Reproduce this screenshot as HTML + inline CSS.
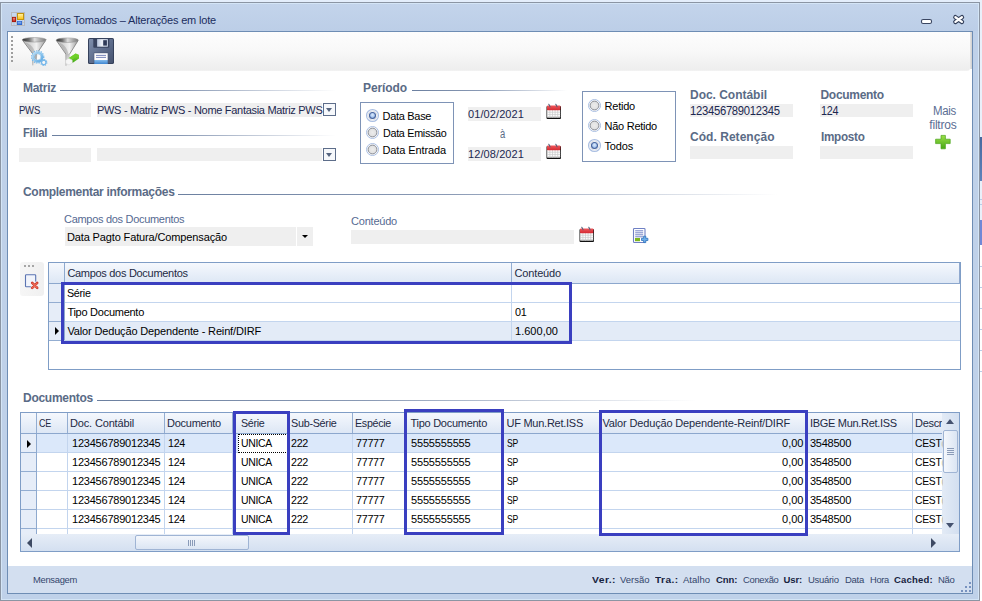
<!DOCTYPE html>
<html lang="pt-BR">
<head>
<meta charset="utf-8">
<title>Serviços Tomados – Alterações em lote</title>
<style>
html,body{margin:0;padding:0}
body{width:982px;height:601px;position:relative;overflow:hidden;background:#e4eefb;font-family:"Liberation Sans",sans-serif;font-size:11px;color:#000}
.a,.t{position:absolute;display:block}
.t{white-space:pre;transform-origin:0 0}
.fld{background:#efefef}
.hl{height:1px}
.vl{width:1px}
.box{border:3px solid #3a3fc0;box-sizing:border-box}
svg{position:absolute;overflow:visible}
</style>
</head>
<body>
<!-- things behind the window (right edge) -->
<div class="a" style="left:980px;top:0;width:2px;height:601px;background:#fff"></div>
<div class="a" style="left:980px;top:0;width:2px;height:220px;background:#e9f0fa"></div>
<div class="a" style="left:980px;top:137px;width:2px;height:44px;background:linear-gradient(#47699f,#5f83bb)"></div>
<div class="a" style="left:980px;top:220px;width:2px;height:25px;background:#7188d6"></div>
<div class="a" style="left:980px;top:199px;width:2px;height:1px;background:#b9cde8;box-shadow:0 5px #b9cde8,0 67px #b9cde8,0 88px #b9cde8,0 109px #b9cde8,0 130px #b9cde8,0 151px #b9cde8,0 172px #b9cde8"></div>

<!-- window frame -->
<div class="a" id="win" style="left:0;top:2px;width:980px;height:599px;box-sizing:border-box;border:1px solid #8b95a3;background:#bfd1e9">
  <div class="a" style="left:0;top:0;width:978px;height:597px;box-sizing:border-box;border:1px solid #d4e5f6"></div>
  <div class="a" id="titlebar" style="left:1px;top:1px;width:976px;height:27px;background:linear-gradient(#c3d4eb,#bccee7)"></div>
</div>
<!-- app icon -->
<svg style="left:11px;top:12px" width="14" height="14" viewBox="0 0 14 14">
  <defs>
    <linearGradient id="iy" x1="0" x2="0" y1="0" y2="1"><stop offset="0" stop-color="#fff0a0"/><stop offset="1" stop-color="#ffc61a"/></linearGradient>
    <linearGradient id="ir" x1="0" x2="0" y1="0" y2="1"><stop offset="0" stop-color="#f28a7c"/><stop offset="1" stop-color="#cf2a1c"/></linearGradient>
    <linearGradient id="ib" x1="0" x2="0" y1="0" y2="1"><stop offset="0" stop-color="#8fb9f6"/><stop offset="1" stop-color="#3f7ee0"/></linearGradient>
  </defs>
  <rect x="0.5" y="0.5" width="13" height="13" fill="#c6d8f0" stroke="#b7b9bd" stroke-width="1"/>
  <path d="M5.5 0.5V13.5M0.5 4.5H5.5M0.5 10.5H13.5M3 10.5V13.5M11.5 8.5V13.5" stroke="#b9bcc2" stroke-width=".7" fill="none"/>
  <rect x="6" y="1" width="7" height="7" fill="#c2940f"/>
  <rect x="7" y="2" width="5" height="5" fill="url(#iy)"/>
  <rect x="1" y="5" width="4" height="5" fill="#a3170c"/>
  <rect x="1.8" y="5.8" width="2.4" height="3.4" fill="url(#ir)"/>
  <rect x="6" y="9" width="5" height="4" fill="#2c62c8"/>
  <rect x="6.7" y="9.7" width="3.6" height="2.6" fill="url(#ib)"/>
</svg>
<!-- window buttons -->
<svg style="left:0;top:0" width="982" height="40" viewBox="0 0 982 40">
  <rect x="921.5" y="19.5" width="10" height="4" rx="1.6" fill="#fff" stroke="#3b4762" stroke-width="1.1"/>
  <path d="M955.4 17.2 L961.9 21.9 M961.9 17.2 L955.4 21.9" stroke="#333f5a" stroke-width="4.5" stroke-linecap="round" fill="none"/>
  <path d="M955.4 17.2 L961.9 21.9 M961.9 17.2 L955.4 21.9" stroke="#fff" stroke-width="2.3" stroke-linecap="round" fill="none"/>
</svg>

<!-- client area -->
<div class="a" style="left:7px;top:31px;width:966px;height:563px;box-sizing:border-box;border:1px solid #6e8db4;background:#fff"></div>
<!-- toolbar -->
<div class="a" style="left:970px;top:32px;width:2px;height:37px;background:linear-gradient(90deg,#e6e6e6,#cfcfcf)"></div>
<div class="a" style="left:9px;top:32px;width:961px;height:39px;background:linear-gradient(#fdfdfd 0%,#f8f8f8 50%,#eeeeee 96%,#f3f3f3 100%);border-radius:0 0 3px 3px"></div>
<div class="a" style="left:11px;top:36px;width:2px;height:2px;background:#9e9e9e;box-shadow:0 4px #9e9e9e,0 8px #9e9e9e,0 12px #9e9e9e,0 16px #9e9e9e,0 20px #9e9e9e,0 24px #9e9e9e"></div>

<!-- group header lines -->
<div class="a hl" style="left:60px;top:90px;width:276px;background:linear-gradient(90deg,#6c80a0 0%,#8a9ab5 45%,#fff 100%)"></div>
<div class="a hl" style="left:52px;top:135px;width:284px;background:linear-gradient(90deg,#6c80a0 0%,#8a9ab5 45%,#fff 100%)"></div>
<div class="a hl" style="left:412px;top:90px;width:155px;background:linear-gradient(90deg,#6c80a0 0%,#8a9ab5 45%,#fff 100%)"></div>
<div class="a hl" style="left:178px;top:194px;width:600px;background:linear-gradient(90deg,#6c80a0 0%,#8a9ab5 45%,#fff 100%)"></div>
<div class="a hl" style="left:97px;top:400px;width:600px;background:linear-gradient(90deg,#6c80a0 0%,#8a9ab5 45%,#fff 100%)"></div>

<!-- Matriz / Filial fields -->
<div class="a fld" style="left:19px;top:103px;width:72px;height:14px"></div>
<div class="a fld" style="left:97px;top:103px;width:225px;height:14px"></div>
<div class="a fld" style="left:19px;top:148px;width:72px;height:14px"></div>
<div class="a fld" style="left:97px;top:148px;width:225px;height:13px"></div>
<div class="a ddb" style="left:323px;top:103px;width:13px;height:13px;box-sizing:border-box;border:1px solid #5d6d8a;background:#f6f8fb"></div>
<div class="a" style="left:326px;top:108px;width:0;height:0;border-left:3.5px solid transparent;border-right:3.5px solid transparent;border-top:4px solid #55647f"></div>
<div class="a ddb" style="left:323px;top:148px;width:13px;height:13px;box-sizing:border-box;border:1px solid #5d6d8a;background:#f6f8fb"></div>
<div class="a" style="left:326px;top:153px;width:0;height:0;border-left:3.5px solid transparent;border-right:3.5px solid transparent;border-top:4px solid #55647f"></div>

<!-- Periodo radio box -->
<div class="a" style="left:360px;top:102px;width:94px;height:62px;box-sizing:border-box;border:1px solid #7e93b6"></div>
<!-- date fields -->
<div class="a fld" style="left:468px;top:107px;width:73px;height:14px"></div>
<div class="a fld" style="left:468px;top:147px;width:73px;height:14px"></div>
<!-- Retido radio box -->
<div class="a" style="left:582px;top:91px;width:94px;height:71px;box-sizing:border-box;border:1px solid #7e93b6"></div>
<!-- right fields -->
<div class="a fld" style="left:690px;top:104px;width:103px;height:13px"></div>
<div class="a fld" style="left:820px;top:104px;width:93px;height:13px"></div>
<div class="a fld" style="left:690px;top:146px;width:103px;height:13px"></div>
<div class="a fld" style="left:820px;top:146px;width:93px;height:13px"></div>

<!-- complementar -->
<div class="a fld" style="left:65px;top:227px;width:231px;height:19px"></div>
<div class="a fld" style="left:297px;top:227px;width:16px;height:19px"></div>
<div class="a" style="left:302px;top:235px;width:0;height:0;border-left:3px solid transparent;border-right:3px solid transparent;border-top:3px solid #000"></div>
<div class="a fld" style="left:351px;top:230px;width:223px;height:14px"></div>

<!-- small side toolbar -->
<div class="a" style="left:20px;top:262px;width:24px;height:34px;background:linear-gradient(90deg,#f6f6f6,#f0f0f0);border-radius:3px"></div>
<div class="a" style="left:24px;top:265px;width:2px;height:2px;background:#a6a6a6;box-shadow:4px 0 #a6a6a6,8px 0 #a6a6a6"></div>

<!-- grid 1 -->
<div class="a" id="g1" style="left:48px;top:262px;width:913px;height:108px;box-sizing:border-box;border:1px solid #7f9dc6;background:#fff">
  <div class="a" style="left:0;top:0;width:911px;height:20px;background:linear-gradient(#f5f8fd,#dde7f5)"></div>
  <div class="a hl" style="left:0;top:20px;width:911px;background:#8ca7cd"></div>
  <div class="a" style="left:0;top:21px;width:15px;height:56px;background:#e6edf8"></div>
  <div class="a" style="left:16px;top:59px;width:895px;height:18px;background:#e3ebf7"></div>
  <div class="a hl" style="left:0;top:39px;width:911px;background:#c3d5ee"></div>
  <div class="a hl" style="left:0;top:58px;width:911px;background:#c3d5ee"></div>
  <div class="a hl" style="left:0;top:77px;width:911px;background:#c3d5ee"></div>
  <div class="a vl" style="left:15px;top:0;height:77px;background:#8ea9ce"></div>
  <div class="a vl" style="left:462px;top:0;height:77px;background:#c3d5ee"></div>
  <div class="a vl" style="left:462px;top:0;height:20px;background:#93adD1"></div>
  <div class="a vl" style="left:910px;top:0;height:20px;background:#90a9cf"></div>
  <div class="a hl" style="left:0;top:39px;width:15px;background:#93add1;box-shadow:0 19px #93add1,0 38px #93add1"></div>
  <div class="a" style="left:6px;top:64px;width:0;height:0;border-top:4px solid transparent;border-bottom:4px solid transparent;border-left:4px solid #000"></div>
</div>
<div class="a box" style="left:61px;top:282px;width:511px;height:62px"></div>

<!-- grid 2 -->
<div class="a" id="g2" style="left:20px;top:412px;width:940px;height:140px;box-sizing:border-box;border:1px solid #7f9dc6;background:#fff;overflow:hidden">
  <div class="a" style="left:0;top:0;width:938px;height:20px;background:linear-gradient(#f5f8fd,#dde7f5)"></div>
  <div class="a" style="left:0;top:21px;width:15px;height:101px;background:#e6edf8"></div>
  <div class="a" style="left:16px;top:21px;width:906px;height:18px;background:#dbe8fa"></div>
  <div class="a hl" style="left:0;top:20px;width:938px;background:#8ca7cd"></div>
  <div class="a hl" style="left:0;top:39px;width:922px;background:#c3d5ee"></div>
  <div class="a hl" style="left:0;top:58px;width:922px;background:#c3d5ee"></div>
  <div class="a hl" style="left:0;top:77px;width:922px;background:#c3d5ee"></div>
  <div class="a hl" style="left:0;top:96px;width:922px;background:#c3d5ee"></div>
  <div class="a hl" style="left:0;top:115px;width:922px;background:#c3d5ee"></div>
  <div class="a vl" style="left:15px;top:0;height:20px;background:#93add1"></div><div class="a vl" style="left:15px;top:21px;height:101px;background:#8ea9ce"></div>
<div class="a vl" style="left:46px;top:0;height:20px;background:#93add1"></div><div class="a vl" style="left:46px;top:21px;height:101px;background:#c3d5ee"></div>
<div class="a vl" style="left:143px;top:0;height:20px;background:#93add1"></div><div class="a vl" style="left:143px;top:21px;height:101px;background:#c3d5ee"></div>
<div class="a vl" style="left:211px;top:0;height:20px;background:#93add1"></div><div class="a vl" style="left:211px;top:21px;height:101px;background:#c3d5ee"></div>
<div class="a vl" style="left:267px;top:0;height:20px;background:#93add1"></div><div class="a vl" style="left:267px;top:21px;height:101px;background:#c3d5ee"></div>
<div class="a vl" style="left:331px;top:0;height:20px;background:#93add1"></div><div class="a vl" style="left:331px;top:21px;height:101px;background:#c3d5ee"></div>
<div class="a vl" style="left:384px;top:0;height:20px;background:#93add1"></div><div class="a vl" style="left:384px;top:21px;height:101px;background:#c3d5ee"></div>
<div class="a vl" style="left:482px;top:0;height:20px;background:#93add1"></div><div class="a vl" style="left:482px;top:21px;height:101px;background:#c3d5ee"></div>
<div class="a vl" style="left:578px;top:0;height:20px;background:#93add1"></div><div class="a vl" style="left:578px;top:21px;height:101px;background:#c3d5ee"></div>
<div class="a vl" style="left:786px;top:0;height:20px;background:#93add1"></div><div class="a vl" style="left:786px;top:21px;height:101px;background:#c3d5ee"></div>
<div class="a vl" style="left:891px;top:0;height:20px;background:#93add1"></div><div class="a vl" style="left:891px;top:21px;height:101px;background:#c3d5ee"></div>

  <div class="a hl" style="left:0;top:39px;width:15px;background:#93add1;box-shadow:0 19px #93add1,0 38px #93add1,0 57px #93add1,0 76px #93add1"></div>
  <div class="a" style="left:6px;top:27px;width:0;height:0;border-top:4px solid transparent;border-bottom:4px solid transparent;border-left:4px solid #000"></div>
  <!-- focus rect -->
  <div class="a" style="left:217px;top:21px;width:50px;height:19px;box-sizing:border-box;border:1px dotted #000;background:#fff"></div>
  <!-- vertical scrollbar -->
  <div class="a" style="left:921px;top:0;width:17px;height:122px;background:linear-gradient(90deg,#e3ebf6,#d3dff0)"></div>
  <div class="a" style="left:922px;top:17px;width:15px;height:43px;box-sizing:border-box;border:1px solid #9fb4d4;border-radius:2px;background:linear-gradient(90deg,#f4f7fc,#dbe5f3)"></div>
  <div class="a" style="left:926px;top:35px;width:7px;height:1px;background:#8a9bb8;box-shadow:0 2px #8a9bb8,0 4px #8a9bb8,0 6px #8a9bb8"></div>
  <div class="a" style="left:925px;top:6px;width:0;height:0;border-left:4.5px solid transparent;border-right:4.5px solid transparent;border-bottom:5px solid #45526f"></div>
  <div class="a" style="left:925px;top:110px;width:0;height:0;border-left:4.5px solid transparent;border-right:4.5px solid transparent;border-top:5px solid #45526f"></div>
  <!-- horizontal scrollbar -->
  <div class="a" style="left:0;top:121px;width:938px;height:18px;background:linear-gradient(#e6edf7,#d3dff0)"></div>
  <div class="a" style="left:114px;top:122px;width:114px;height:15px;box-sizing:border-box;border:1px solid #9fb4d4;border-radius:2px;background:linear-gradient(#f4f7fc,#dbe5f3)"></div>
  <div class="a" style="left:167px;top:127px;width:1px;height:6px;background:#8a9bb8;box-shadow:2px 0 #8a9bb8,4px 0 #8a9bb8,6px 0 #8a9bb8"></div>
  <div class="a" style="left:6px;top:125px;width:0;height:0;border-top:5px solid transparent;border-bottom:5px solid transparent;border-right:5px solid #3e4a63"></div>
  <div class="a" style="left:910px;top:125px;width:0;height:0;border-top:5px solid transparent;border-bottom:5px solid transparent;border-left:5px solid #3e4a63"></div>
</div>
<div class="a box" style="left:233px;top:411px;width:57px;height:124px"></div>
<div class="a box" style="left:404px;top:409px;width:100px;height:126px"></div>
<div class="a box" style="left:599px;top:410px;width:209px;height:126px"></div>

<!-- status bar -->
<div class="a" style="left:8px;top:566px;width:964px;height:27px;background:#d3dff0"></div>
<div class="a" style="left:969px;top:582px;width:2px;height:2px;background:#7892bf;box-shadow:0 4px #7892bf,0 8px #7892bf,-4px 4px #7892bf,-4px 8px #7892bf,-8px 8px #7892bf"></div>

<svg style="left:0;top:0" width="982" height="601" viewBox="0 0 982 601">
<defs>
  <linearGradient id="fr" x1="0" x2="1" y1="0" y2="0"><stop offset="0" stop-color="#2c2c2c"/><stop offset=".28" stop-color="#6e6e6e"/><stop offset=".52" stop-color="#dedede"/><stop offset=".75" stop-color="#a8a8a8"/><stop offset="1" stop-color="#777"/></linearGradient>
  <linearGradient id="fc" x1="0" x2="1" y1="0" y2="0"><stop offset="0" stop-color="#bdbdbd"/><stop offset=".35" stop-color="#d9d9d9"/><stop offset=".6" stop-color="#f1f1f1"/><stop offset="1" stop-color="#9c9c9c"/></linearGradient>
  <linearGradient id="fs" x1="0" x2="0" y1="0" y2="1"><stop offset="0" stop-color="#bdbdbd"/><stop offset="1" stop-color="#f4f4f4"/></linearGradient>
  <g id="funnel">
    <path d="M0.6 3.2 L23.8 3.2 L14.9 16.2 L14.5 27.2 L11.6 29.2 L10.6 28.2 L10.4 16.2 Z" fill="url(#fc)"/>
    <path d="M3.5 5.2 C7.5 6.5 12 9.5 13.6 17 L11 17 Z" fill="#8e8e8e" opacity=".42"/>
    <path d="M0.8 3.4 L10.9 16.8 M23.6 3.4 L14.5 16.8" stroke="#6b6b6b" stroke-width=".9" fill="none" opacity=".8"/>
    <path d="M10.5 16.4 L10.7 28.2 L11.6 29.1 L14.4 27.2 L14.8 16.4 Z" fill="url(#fs)"/>
    <path d="M10.6 16.6 L10.8 28.2" stroke="#8a8a8a" stroke-width=".8" opacity=".7"/>
    <ellipse cx="12.2" cy="2.6" rx="12.1" ry="2.3" fill="url(#fr)"/>
    <ellipse cx="12.2" cy="2.6" rx="12.1" ry="2.3" fill="none" stroke="#8d8d8d" stroke-width=".5"/>
  </g>
  <linearGradient id="gear" x1="0" x2="1" y1="0" y2="1"><stop offset="0" stop-color="#c6e6fa"/><stop offset=".5" stop-color="#9dd0f3"/><stop offset="1" stop-color="#62abe4"/></linearGradient>
  <linearGradient id="er" x1="0" x2="0" y1="0" y2="1"><stop offset="0" stop-color="#8be03c"/><stop offset="1" stop-color="#3da712"/></linearGradient>
  <linearGradient id="fl" x1="0" x2="1" y1="0" y2="1"><stop offset="0" stop-color="#8090ad"/><stop offset=".5" stop-color="#5f6e8d"/><stop offset="1" stop-color="#46536f"/></linearGradient>
  <linearGradient id="sl" x1="0" x2="1" y1="0" y2="0"><stop offset="0" stop-color="#b9c6dd"/><stop offset=".45" stop-color="#edf1f8"/><stop offset="1" stop-color="#c4cfe3"/></linearGradient>
  <linearGradient id="bl" x1="0" x2="0" y1="0" y2="1"><stop offset="0" stop-color="#86bcec"/><stop offset="1" stop-color="#3f86d2"/></linearGradient>
  <linearGradient id="cr" x1="0" x2="0" y1="0" y2="1"><stop offset="0" stop-color="#f0585c"/><stop offset="1" stop-color="#d42a32"/></linearGradient>
  <g id="cal">
    <rect x="0.5" y="2" width="14.5" height="13" rx="1" fill="#111"/>
    <rect x="1.2" y="6" width="13" height="7.6" fill="#fff"/>
    <path d="M1.2 8.2H14.2M1.2 10.4H14.2M1.2 12.4H14.2M3.9 6V13.6M6.5 6V13.6M9.1 6V13.6M11.7 6V13.6" stroke="#c9c9c9" stroke-width=".7" fill="none"/>
    <rect x="1" y="1.4" width="13.4" height="4.8" rx=".8" fill="url(#cr)"/>
    <path d="M2.8 0.3 L4.1 2.8 M9.8 0.3 L11.1 2.8" stroke="#56617a" stroke-width="1.1" stroke-linecap="round"/>
  </g>
  <radialGradient id="r0" cx=".5" cy=".5" r=".5"><stop offset="0" stop-color="#ececec"/><stop offset=".75" stop-color="#e2e2e2"/><stop offset="1" stop-color="#cfcfcf"/></radialGradient>
  <radialGradient id="r1" cx=".5" cy=".4" r=".55"><stop offset="0" stop-color="#dcebfc"/><stop offset=".7" stop-color="#a9c6ee"/><stop offset="1" stop-color="#7fa3da"/></radialGradient>
  <g id="rad0">
    <circle r="6" fill="#fff" stroke="#a9bee2" stroke-width="1"/>
    <circle r="4.4" fill="url(#r0)" stroke="#8c9099" stroke-width="1"/>
  </g>
  <g id="rad1">
    <circle r="6" fill="#fff" stroke="#a9bee2" stroke-width="1.1"/>
    <circle r="4.6" fill="#fbfcfe" stroke="#c3c9d6" stroke-width=".7"/>
    <circle r="3" fill="url(#r1)" stroke="#4a669e" stroke-width="1.1"/>
  </g>
  <linearGradient id="pg" x1="0" x2="0" y1="0" y2="1"><stop offset="0" stop-color="#9be048"/><stop offset="1" stop-color="#46a715"/></linearGradient>
</defs>
<!-- toolbar: filter config -->
<use href="#funnel" x="22" y="37.2"/>
<g transform="translate(37.7 56.9)">
  <circle r="5.95" fill="none" stroke="#74b7ea" stroke-width="1.5" stroke-dasharray="1.3 1.036"/>
  <circle r="4.45" fill="none" stroke="url(#gear)" stroke-width="2.5"/>
  <circle r="4.45" fill="none" stroke="#4f9ddb" stroke-width=".5" opacity=".6"/>
  <circle r="3.2" fill="#fbfbfb"/>
  <path d="M-3.1 -0.8 A3.2 3.2 0 0 0 -0.9 3.05 L-0.5 -3.15 A3.2 3.2 0 0 0 -3.1 -0.8 Z" fill="#8f8f8f" opacity=".7"/>
  <circle r="3.2" fill="none" stroke="#5fa6de" stroke-width=".5"/>
</g>
<g transform="translate(43.8 62.5)">
  <circle r="3" fill="none" stroke="#72b5e8" stroke-width="1.2" stroke-dasharray="1.1 1.256"/>
  <circle r="2.15" fill="none" stroke="#77b8ea" stroke-width="1.5"/>
  <circle r="1.35" fill="#f8f8f8"/>
</g>
<!-- toolbar: filter clear -->
<g transform="translate(56 37.6) scale(0.925 1)"><use href="#funnel"/></g>
<path d="M68.2 58.6 L75.6 53.4 L79 55 L79 58.6 L72.4 63 Z" fill="url(#er)"/>
<path d="M68.2 58.6 L75.6 53.4 L79 55 L71.8 59.8 Z" fill="#6fd02a"/>
<path d="M65.6 60.4 L68.6 58.2 L72.2 60 L72.4 63 L69 65 L65.8 63.4 Z" fill="#f6f6f6" stroke="#d2d2d2" stroke-width=".5"/>
<!-- toolbar: save -->
<rect x="88" y="38" width="26" height="26" rx="1.6" fill="#36425c"/>
<rect x="89" y="39" width="24" height="24" rx="1" fill="url(#fl)"/>
<rect x="93.3" y="38.4" width="16" height="9.4" rx=".8" fill="#39445f"/>
<rect x="97.1" y="39.1" width="10.8" height="7.6" fill="url(#sl)"/>
<rect x="103.2" y="40.2" width="3.7" height="5.4" fill="#2f3a57"/>
<rect x="93.8" y="52.6" width="14.4" height="11.4" fill="#465370"/>
<rect x="94.3" y="53.2" width="13.4" height="6.8" fill="#fdfdfe"/>
<rect x="94.3" y="60" width="13.4" height="4" fill="url(#bl)"/>
<path d="M96 55.4H106M96 57.4H106" stroke="#6b79b2" stroke-width=".9"/>
<!-- calendars -->
<use href="#cal" x="546" y="104"/>
<use href="#cal" x="546" y="144"/>
<use href="#cal" x="579" y="227"/>
<!-- radios -->
<use href="#rad1" x="372.5" y="115.5"/>
<use href="#rad0" x="372.5" y="132.5"/>
<use href="#rad0" x="372.5" y="149.5"/>
<use href="#rad0" x="594.5" y="105.5"/>
<use href="#rad0" x="594.5" y="125.5"/>
<use href="#rad1" x="594.5" y="145.5"/>
<!-- plus -->
<path d="M941 135.4H945.4V139.2H950.2V143.6H945.4V148.8H941V143.6H935.6V139.2H941Z" fill="url(#pg)" stroke="#4aa51a" stroke-width=".7" stroke-linejoin="round"/>
<!-- add-doc icon -->
<rect x="633.5" y="228.5" width="11.5" height="14" rx=".8" fill="#fff" stroke="#6f80c4" stroke-width="1.1"/>
<path d="M635.2 230.8H643.2M635.2 232.8H643.2M635.2 234.8H643.2M635.2 236.8H643.2" stroke="#7383c6" stroke-width="1"/>
<rect x="635" y="238" width="5" height="3.2" fill="#7cb61f"/>
<path d="M643.6 236.2H645.8V238.3H647.9V240.5H645.8V242.6H643.6V240.5H641.5V238.3H643.6Z" fill="#6fb0ea" stroke="#2f72bd" stroke-width=".8" stroke-linejoin="round"/>
<!-- delete-row icon -->
<rect x="25.5" y="274.7" width="10.2" height="12" rx=".8" fill="#f1f4fb" stroke="#5b74b2" stroke-width="1.1"/>
<circle cx="34.7" cy="285.4" r="4" fill="#f4f4f4"/>
<path d="M32.2 282.9L37.2 287.9M37.2 282.9L32.2 287.9" stroke="#c8372b" stroke-width="2.6" stroke-linecap="round"/>
<path d="M32.4 283.1L37 287.7M37 283.1L32.4 287.7" stroke="#ec6a56" stroke-width="1.3" stroke-linecap="round"/>
</svg>

<span class="t" style="left:30px;top:14px;font-size:11px;line-height:13px;color:#1b2d5e;letter-spacing:-0.173px;">Serviços Tomados – Alterações em lote</span>
<span class="t" style="left:23px;top:81px;font-size:12px;line-height:14px;font-weight:bold;color:#5a6b86;letter-spacing:-0.279px;">Matriz</span>
<span class="t" style="left:23px;top:126px;font-size:12px;line-height:14px;font-weight:bold;color:#5a6b86;letter-spacing:-0.300px;transform:scaleX(0.9396);">Filial</span>
<span class="t" style="left:363px;top:81px;font-size:12px;line-height:14px;font-weight:bold;color:#5a6b86;letter-spacing:-0.096px;">Período</span>
<span class="t" style="left:23px;top:185px;font-size:12px;line-height:14px;font-weight:bold;color:#5a6b86;letter-spacing:-0.300px;">Complementar informações</span>
<span class="t" style="left:23px;top:391px;font-size:12px;line-height:14px;font-weight:bold;color:#5a6b86;letter-spacing:-0.269px;">Documentos</span>
<span class="t" style="left:690px;top:88px;font-size:12px;line-height:14px;font-weight:bold;color:#5a6b86;letter-spacing:-0.026px;">Doc. Contábil</span>
<span class="t" style="left:820.5px;top:88px;font-size:12px;line-height:14px;font-weight:bold;color:#5a6b86;letter-spacing:-0.300px;">Documento</span>
<span class="t" style="left:690px;top:130px;font-size:12px;line-height:14px;font-weight:bold;color:#5a6b86;letter-spacing:0.037px;">Cód. Retenção</span>
<span class="t" style="left:820.5px;top:130px;font-size:12px;line-height:14px;font-weight:bold;color:#5a6b86;letter-spacing:-0.300px;transform:scaleX(0.9760);">Imposto</span>
<span class="t" style="left:19px;top:104px;font-size:11px;line-height:13px;color:#1c2850;letter-spacing:-0.300px;transform:scaleX(0.8691);">PWS</span>
<span class="t" style="left:97px;top:104px;font-size:11px;line-height:13px;color:#1c2850;letter-spacing:-0.300px;">PWS - Matriz PWS - Nome Fantasia Matriz PWS</span>
<span class="t" style="left:382.5px;top:110px;font-size:11px;line-height:13px;letter-spacing:-0.300px;">Data Base</span>
<span class="t" style="left:382.5px;top:127px;font-size:11px;line-height:13px;letter-spacing:-0.300px;transform:scaleX(0.9787);">Data Emissão</span>
<span class="t" style="left:382.5px;top:144px;font-size:11px;line-height:13px;letter-spacing:-0.111px;">Data Entrada</span>
<span class="t" style="left:468px;top:108px;font-size:11px;line-height:13px;color:#1c2850;letter-spacing:0.094px;">01/02/2021</span>
<span class="t" style="left:499.5px;top:127px;font-size:12px;line-height:14px;color:#5a6b86;letter-spacing:-0.300px;transform:scaleX(0.7828);">à</span>
<span class="t" style="left:468px;top:148px;font-size:11px;line-height:13px;color:#1c2850;letter-spacing:0.094px;">12/08/2021</span>
<span class="t" style="left:604.5px;top:100px;font-size:11px;line-height:13px;letter-spacing:-0.216px;">Retido</span>
<span class="t" style="left:604.5px;top:120px;font-size:11px;line-height:13px;letter-spacing:-0.255px;">Não Retido</span>
<span class="t" style="left:604.5px;top:140px;font-size:11px;line-height:13px;letter-spacing:-0.172px;">Todos</span>
<span class="t" style="left:690.3px;top:104px;font-size:12px;line-height:14px;color:#1c2850;letter-spacing:-0.300px;transform:scaleX(0.9382);">123456789012345</span>
<span class="t" style="left:820.8px;top:104px;font-size:12px;line-height:14px;color:#1c2850;letter-spacing:-0.300px;transform:scaleX(0.8991);">124</span>
<span class="t" style="left:932.5px;top:104px;font-size:12px;line-height:14px;color:#5a6d93;letter-spacing:-0.300px;transform:scaleX(0.9526);">Mais</span>
<span class="t" style="left:929.3px;top:118px;font-size:12px;line-height:14px;color:#5a6d93;letter-spacing:-0.210px;">filtros</span>
<span class="t" style="left:64px;top:213px;font-size:11px;line-height:13px;color:#566a92;letter-spacing:-0.300px;">Campos dos Documentos</span>
<span class="t" style="left:67px;top:231px;font-size:11px;line-height:13px;letter-spacing:-0.134px;">Data Pagto Fatura/Compensação</span>
<span class="t" style="left:351px;top:215px;font-size:11px;line-height:13px;color:#566a92;letter-spacing:-0.215px;">Conteúdo</span>
<span class="t" style="left:67.4px;top:267px;font-size:11px;line-height:13px;color:#1e2a44;letter-spacing:-0.300px;">Campos dos Documentos</span>
<span class="t" style="left:514.5px;top:267px;font-size:11px;line-height:13px;color:#1e2a44;letter-spacing:-0.152px;">Conteúdo</span>
<span class="t" style="left:67.4px;top:287px;font-size:11px;line-height:13px;letter-spacing:-0.300px;transform:scaleX(0.9757);">Série</span>
<span class="t" style="left:67.4px;top:306px;font-size:11px;line-height:13px;letter-spacing:-0.265px;">Tipo Documento</span>
<span class="t" style="left:67.4px;top:325px;font-size:11px;line-height:13px;letter-spacing:-0.149px;">Valor Dedução Dependente - Reinf/DIRF</span>
<span class="t" style="left:515px;top:306px;font-size:11px;line-height:13px;letter-spacing:-0.300px;transform:scaleX(0.9871);">01</span>
<span class="t" style="left:515px;top:325px;font-size:11px;line-height:13px;letter-spacing:0.021px;">1.600,00</span>
<span class="t" style="left:39px;top:417px;font-size:11px;line-height:13px;color:#1e2a44;letter-spacing:-0.300px;transform:scaleX(0.8174);">CE</span>
<span class="t" style="left:70px;top:417px;font-size:11px;line-height:13px;color:#1e2a44;letter-spacing:-0.157px;">Doc. Contábil</span>
<span class="t" style="left:167px;top:417px;font-size:11px;line-height:13px;color:#1e2a44;letter-spacing:-0.252px;">Documento</span>
<span class="t" style="left:240.5px;top:417px;font-size:11px;line-height:13px;color:#1e2a44;letter-spacing:-0.300px;transform:scaleX(0.9716);">Série</span>
<span class="t" style="left:290.5px;top:417px;font-size:11px;line-height:13px;color:#1e2a44;letter-spacing:-0.300px;transform:scaleX(0.9844);">Sub-Série</span>
<span class="t" style="left:355px;top:417px;font-size:11px;line-height:13px;color:#1e2a44;letter-spacing:-0.300px;transform:scaleX(0.9719);">Espécie</span>
<span class="t" style="left:410.5px;top:417px;font-size:11px;line-height:13px;color:#1e2a44;letter-spacing:-0.272px;">Tipo Documento</span>
<span class="t" style="left:506.5px;top:417px;font-size:11px;line-height:13px;color:#1e2a44;letter-spacing:-0.256px;">UF Mun.Ret.ISS</span>
<span class="t" style="left:602.5px;top:417px;font-size:11px;line-height:13px;color:#1e2a44;letter-spacing:-0.158px;">Valor Dedução Dependente-Reinf/DIRF</span>
<span class="t" style="left:810px;top:417px;font-size:11px;line-height:13px;color:#1e2a44;letter-spacing:-0.300px;">IBGE Mun.Ret.ISS</span>
<span class="t" style="left:915px;top:417px;font-size:11px;line-height:13px;color:#1e2a44;letter-spacing:-0.300px;width:27.2px;overflow:hidden;">Descr</span>
<span class="t" style="left:72px;top:437px;font-size:11px;line-height:13px;letter-spacing:-0.218px;">123456789012345</span>
<span class="t" style="left:168px;top:437px;font-size:11px;line-height:13px;letter-spacing:-0.300px;transform:scaleX(0.9737);">124</span>
<span class="t" style="left:241px;top:437px;font-size:11px;line-height:13px;letter-spacing:-0.300px;transform:scaleX(0.9470);">UNICA</span>
<span class="t" style="left:291px;top:437px;font-size:11px;line-height:13px;letter-spacing:-0.300px;transform:scaleX(0.9737);">222</span>
<span class="t" style="left:355.5px;top:437px;font-size:11px;line-height:13px;letter-spacing:-0.300px;transform:scaleX(0.9796);">77777</span>
<span class="t" style="left:411px;top:437px;font-size:11px;line-height:13px;letter-spacing:-0.169px;">5555555555</span>
<span class="t" style="left:507px;top:437px;font-size:11px;line-height:13px;letter-spacing:-0.300px;transform:scaleX(0.7808);">SP</span>
<span class="t" style="left:782px;top:437px;font-size:11px;line-height:13px;letter-spacing:0.020px;">0,00</span>
<span class="t" style="left:810px;top:437px;font-size:11px;line-height:13px;letter-spacing:-0.261px;">3548500</span>
<span class="t" style="left:915px;top:437px;font-size:11px;line-height:13px;letter-spacing:-0.300px;transform:scaleX(0.9397);width:28.9459px;overflow:hidden;">CEST(</span>
<span class="t" style="left:72px;top:456px;font-size:11px;line-height:13px;letter-spacing:-0.218px;">123456789012345</span>
<span class="t" style="left:168px;top:456px;font-size:11px;line-height:13px;letter-spacing:-0.300px;transform:scaleX(0.9737);">124</span>
<span class="t" style="left:241px;top:456px;font-size:11px;line-height:13px;letter-spacing:-0.300px;transform:scaleX(0.9470);">UNICA</span>
<span class="t" style="left:291px;top:456px;font-size:11px;line-height:13px;letter-spacing:-0.300px;transform:scaleX(0.9737);">222</span>
<span class="t" style="left:355.5px;top:456px;font-size:11px;line-height:13px;letter-spacing:-0.300px;transform:scaleX(0.9796);">77777</span>
<span class="t" style="left:411px;top:456px;font-size:11px;line-height:13px;letter-spacing:-0.169px;">5555555555</span>
<span class="t" style="left:507px;top:456px;font-size:11px;line-height:13px;letter-spacing:-0.300px;transform:scaleX(0.7808);">SP</span>
<span class="t" style="left:782px;top:456px;font-size:11px;line-height:13px;letter-spacing:0.020px;">0,00</span>
<span class="t" style="left:810px;top:456px;font-size:11px;line-height:13px;letter-spacing:-0.261px;">3548500</span>
<span class="t" style="left:915px;top:456px;font-size:11px;line-height:13px;letter-spacing:-0.300px;transform:scaleX(0.9397);width:28.9459px;overflow:hidden;">CEST(</span>
<span class="t" style="left:72px;top:475px;font-size:11px;line-height:13px;letter-spacing:-0.218px;">123456789012345</span>
<span class="t" style="left:168px;top:475px;font-size:11px;line-height:13px;letter-spacing:-0.300px;transform:scaleX(0.9737);">124</span>
<span class="t" style="left:241px;top:475px;font-size:11px;line-height:13px;letter-spacing:-0.300px;transform:scaleX(0.9470);">UNICA</span>
<span class="t" style="left:291px;top:475px;font-size:11px;line-height:13px;letter-spacing:-0.300px;transform:scaleX(0.9737);">222</span>
<span class="t" style="left:355.5px;top:475px;font-size:11px;line-height:13px;letter-spacing:-0.300px;transform:scaleX(0.9796);">77777</span>
<span class="t" style="left:411px;top:475px;font-size:11px;line-height:13px;letter-spacing:-0.169px;">5555555555</span>
<span class="t" style="left:507px;top:475px;font-size:11px;line-height:13px;letter-spacing:-0.300px;transform:scaleX(0.7808);">SP</span>
<span class="t" style="left:782px;top:475px;font-size:11px;line-height:13px;letter-spacing:0.020px;">0,00</span>
<span class="t" style="left:810px;top:475px;font-size:11px;line-height:13px;letter-spacing:-0.261px;">3548500</span>
<span class="t" style="left:915px;top:475px;font-size:11px;line-height:13px;letter-spacing:-0.300px;transform:scaleX(0.9397);width:28.9459px;overflow:hidden;">CEST(</span>
<span class="t" style="left:72px;top:494px;font-size:11px;line-height:13px;letter-spacing:-0.218px;">123456789012345</span>
<span class="t" style="left:168px;top:494px;font-size:11px;line-height:13px;letter-spacing:-0.300px;transform:scaleX(0.9737);">124</span>
<span class="t" style="left:241px;top:494px;font-size:11px;line-height:13px;letter-spacing:-0.300px;transform:scaleX(0.9470);">UNICA</span>
<span class="t" style="left:291px;top:494px;font-size:11px;line-height:13px;letter-spacing:-0.300px;transform:scaleX(0.9737);">222</span>
<span class="t" style="left:355.5px;top:494px;font-size:11px;line-height:13px;letter-spacing:-0.300px;transform:scaleX(0.9796);">77777</span>
<span class="t" style="left:411px;top:494px;font-size:11px;line-height:13px;letter-spacing:-0.169px;">5555555555</span>
<span class="t" style="left:507px;top:494px;font-size:11px;line-height:13px;letter-spacing:-0.300px;transform:scaleX(0.7808);">SP</span>
<span class="t" style="left:782px;top:494px;font-size:11px;line-height:13px;letter-spacing:0.020px;">0,00</span>
<span class="t" style="left:810px;top:494px;font-size:11px;line-height:13px;letter-spacing:-0.261px;">3548500</span>
<span class="t" style="left:915px;top:494px;font-size:11px;line-height:13px;letter-spacing:-0.300px;transform:scaleX(0.9397);width:28.9459px;overflow:hidden;">CEST(</span>
<span class="t" style="left:72px;top:513px;font-size:11px;line-height:13px;letter-spacing:-0.218px;">123456789012345</span>
<span class="t" style="left:168px;top:513px;font-size:11px;line-height:13px;letter-spacing:-0.300px;transform:scaleX(0.9737);">124</span>
<span class="t" style="left:241px;top:513px;font-size:11px;line-height:13px;letter-spacing:-0.300px;transform:scaleX(0.9470);">UNICA</span>
<span class="t" style="left:291px;top:513px;font-size:11px;line-height:13px;letter-spacing:-0.300px;transform:scaleX(0.9737);">222</span>
<span class="t" style="left:355.5px;top:513px;font-size:11px;line-height:13px;letter-spacing:-0.300px;transform:scaleX(0.9796);">77777</span>
<span class="t" style="left:411px;top:513px;font-size:11px;line-height:13px;letter-spacing:-0.169px;">5555555555</span>
<span class="t" style="left:507px;top:513px;font-size:11px;line-height:13px;letter-spacing:-0.300px;transform:scaleX(0.7808);">SP</span>
<span class="t" style="left:782px;top:513px;font-size:11px;line-height:13px;letter-spacing:0.020px;">0,00</span>
<span class="t" style="left:810px;top:513px;font-size:11px;line-height:13px;letter-spacing:-0.261px;">3548500</span>
<span class="t" style="left:915px;top:513px;font-size:11px;line-height:13px;letter-spacing:-0.300px;transform:scaleX(0.9397);width:28.9459px;overflow:hidden;">CEST(</span>
<span class="t" style="left:33px;top:574px;font-size:9.5px;line-height:12px;color:#34466c;letter-spacing:-0.300px;transform:scaleX(0.9865);">Mensagem</span>
<span class="t" style="left:591.5px;top:574px;font-size:9.5px;line-height:12px;font-weight:bold;color:#17233f;letter-spacing:0.400px;transform:scaleX(1.0870);">Ver.:</span>
<span class="t" style="left:620px;top:574px;font-size:9.5px;line-height:12px;color:#34466c;letter-spacing:-0.013px;">Versão</span>
<span class="t" style="left:654.5px;top:574px;font-size:9.5px;line-height:12px;font-weight:bold;color:#17233f;letter-spacing:0.400px;transform:scaleX(1.0652);">Tra.:</span>
<span class="t" style="left:683px;top:574px;font-size:9.5px;line-height:12px;color:#34466c;letter-spacing:0.010px;">Atalho</span>
<span class="t" style="left:716px;top:574px;font-size:9.5px;line-height:12px;font-weight:bold;color:#17233f;letter-spacing:-0.035px;">Cnn:</span>
<span class="t" style="left:742.5px;top:574px;font-size:9.5px;line-height:12px;color:#34466c;letter-spacing:-0.300px;transform:scaleX(0.9880);">Conexão</span>
<span class="t" style="left:783.5px;top:574px;font-size:9.5px;line-height:12px;font-weight:bold;color:#17233f;letter-spacing:-0.129px;">Usr:</span>
<span class="t" style="left:808px;top:574px;font-size:9.5px;line-height:12px;color:#34466c;letter-spacing:-0.300px;">Usuário</span>
<span class="t" style="left:845px;top:574px;font-size:9.5px;line-height:12px;color:#34466c;letter-spacing:-0.270px;">Data</span>
<span class="t" style="left:870px;top:574px;font-size:9.5px;line-height:12px;color:#34466c;letter-spacing:-0.300px;transform:scaleX(0.9797);">Hora</span>
<span class="t" style="left:894px;top:574px;font-size:9.5px;line-height:12px;font-weight:bold;color:#17233f;letter-spacing:0.217px;">Cached:</span>
<span class="t" style="left:938px;top:574px;font-size:9.5px;line-height:12px;color:#34466c;letter-spacing:-0.300px;">Não</span>
</body>
</html>
